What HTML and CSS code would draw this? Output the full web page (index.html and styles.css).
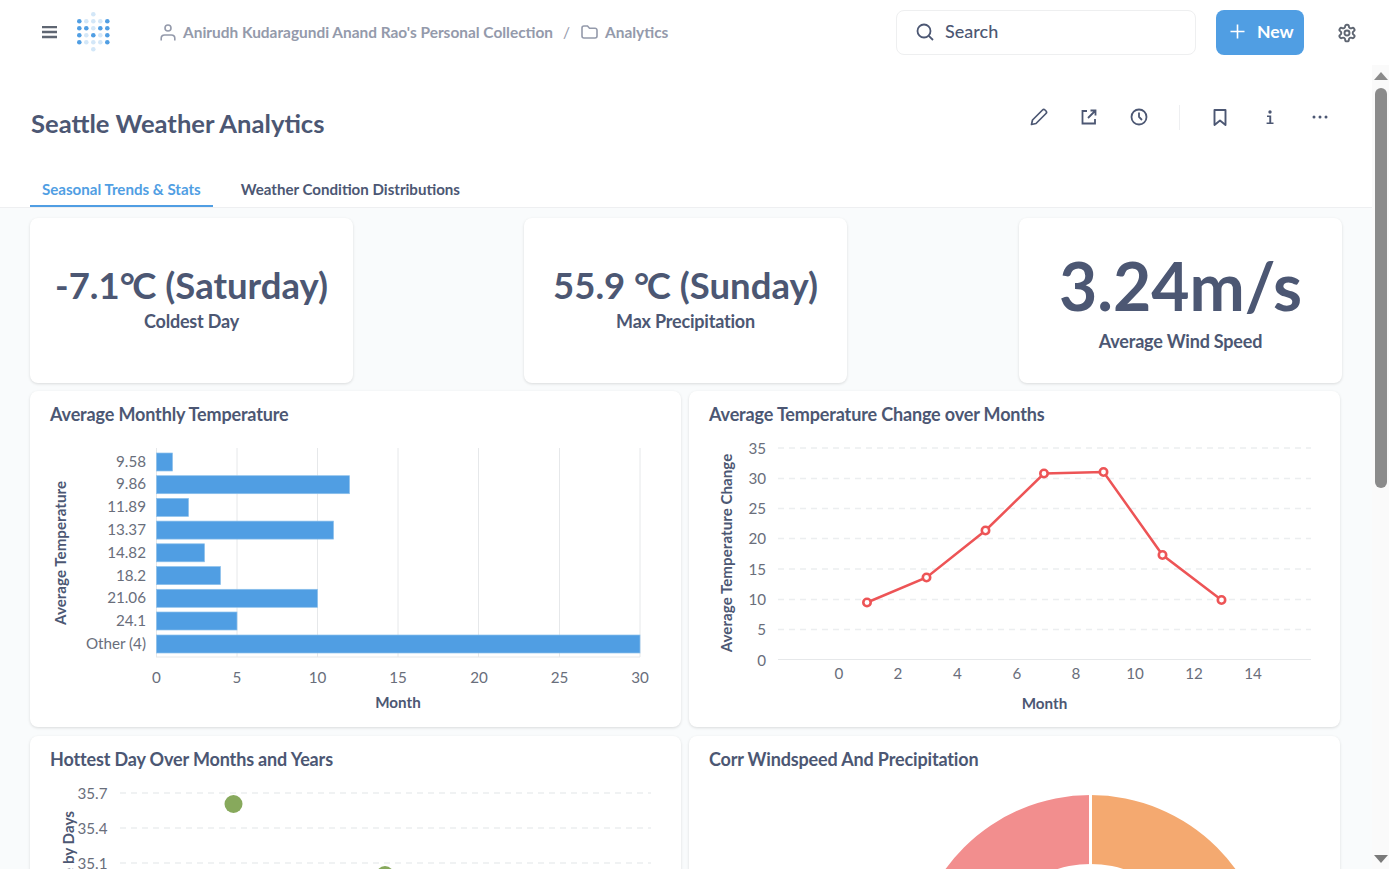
FILE: index.html
```html
<!DOCTYPE html>
<html lang="en">
<head>
  <meta charset="UTF-8" />
  <meta name="viewport" content="width=device-width, initial-scale=1.0" />
  <title>Seattle Weather Analytics</title>
  <link rel="stylesheet" href="styles.css">
</head>
<body>
  <!-- top bar -->
  <header class="topbar">
    <svg class="burger" width="16" height="13" viewBox="0 0 16 13"><path d="M0 1h15M0 6h15M0 11h15" stroke="#5f6672" stroke-width="2.400"/></svg>
    <svg class="logo" width="36" height="42" viewBox="76 12 36 42">
      <g fill="#509ee3">
        <circle cx="79.3" cy="21.3" r="2.3"/><circle cx="107.3" cy="21.3" r="2.3"/>
        <circle cx="79.3" cy="28.3" r="2.3"/><circle cx="86.3" cy="28.3" r="2.3"/><circle cx="100.3" cy="28.3" r="2.3"/><circle cx="107.3" cy="28.3" r="2.3"/>
        <circle cx="79.3" cy="35.3" r="2.3"/><circle cx="93.3" cy="35.3" r="2.3"/><circle cx="107.3" cy="35.3" r="2.3"/>
        <circle cx="79.3" cy="42.3" r="2.3"/><circle cx="107.3" cy="42.3" r="2.3"/>
      </g>
      <g fill="#d3e7f8">
        <circle cx="93.3" cy="14.3" r="2.3"/>
        <circle cx="86.3" cy="21.3" r="2.3"/><circle cx="93.3" cy="21.3" r="2.3"/><circle cx="100.3" cy="21.3" r="2.3"/>
        <circle cx="93.3" cy="28.3" r="2.3"/>
        <circle cx="86.3" cy="35.3" r="2.3"/><circle cx="100.3" cy="35.3" r="2.3"/>
        <circle cx="86.3" cy="42.3" r="2.3"/><circle cx="93.3" cy="42.3" r="2.3"/><circle cx="100.3" cy="42.3" r="2.3"/>
        <circle cx="93.3" cy="49.3" r="2.3"/>
      </g>
    </svg>
    <nav class="crumbs">
      <svg width="16" height="17" viewBox="0 0 16 17" fill="none" stroke="#949aab" stroke-width="1.6"><circle cx="8" cy="4" r="3"/><path d="M1.2 16.5v-2.2c0-2 1.5-3.3 3.5-3.3h6.6c2 0 3.5 1.300 3.500 3.300v2.200"/></svg>
      <span class="crumb-text">Anirudh Kudaragundi Anand Rao's Personal Collection</span>
      <span class="crumb-sep">/</span>
      <svg width="17" height="14" viewBox="0 0 17 14" fill="none" stroke="#949aab" stroke-width="1.6"><path d="M1 3a2 2 0 0 1 2-2h3.500l2 2.200H14a2 2 0 0 1 2 2V11a2 2 0 0 1-2 2H3a2 2 0 0 1-2-2z"/></svg>
      <span class="crumb-text">Analytics</span>
    </nav>
    <div class="search">
      <svg width="18" height="18" viewBox="0 0 18 18" fill="none" stroke="#4c5773" stroke-width="1.800"><circle cx="8" cy="8" r="6.500"/><path d="M12.800 12.800l4.200 4.200"/></svg>
      <span>Search</span>
    </div>
    <button class="new-btn">
      <svg width="15" height="15" viewBox="0 0 15 15"><path d="M7.500 0.500v14M0.500 7.500h14" stroke="#fff" stroke-width="1.600"/></svg>
      New
    </button>
    <svg class="gear" width="20" height="20" viewBox="0 0 24 24" fill="none" stroke="#5f6672" stroke-width="2.300"><path d="M12.220 2h-.44a2 2 0 0 0-2 2v.18a2 2 0 0 1-1 1.730l-.43.25a2 2 0 0 1-2 0l-.15-.08a2 2 0 0 0-2.730.73l-.22.38a2 2 0 0 0 .73 2.730l.15.1a2 2 0 0 1 1 1.720v.51a2 2 0 0 1-1 1.740l-.15.09a2 2 0 0 0-.73 2.730l.22.38a2 2 0 0 0 2.730.73l.15-.08a2 2 0 0 1 2 0l.43.25a2 2 0 0 1 1 1.730V20a2 2 0 0 0 2 2h.44a2 2 0 0 0 2-2v-.18a2 2 0 0 1 1-1.730l.43-.25a2 2 0 0 1 2 0l.15.08a2 2 0 0 0 2.730-.73l.22-.39a2 2 0 0 0-.73-2.730l-.15-.08a2 2 0 0 1-1-1.740v-.5a2 2 0 0 1 1-1.740l.15-.09a2 2 0 0 0 .73-2.730l-.22-.38a2 2 0 0 0-2.730-.73l-.15.08a2 2 0 0 1-2 0l-.43-.25a2 2 0 0 1-1-1.730V4a2 2 0 0 0-2-2z"/><circle cx="12" cy="12" r="3"/></svg>
  </header>

  <div class="main">
    <main class="content">
      <section class="dash-head">
        <div class="title-row">
          <h1>Seattle Weather Analytics</h1>
          <div class="actions">
            <span class="action"><svg width="18" height="18" viewBox="0 0 18 18" fill="none" stroke="#4c5773" stroke-width="1.700" stroke-linejoin="round"><path d="M1.500 16.500l1-4.500L12.500 2a1.800 1.800 0 0 1 2.500 0l1 1a1.800 1.800 0 0 1 0 2.500L6 15.500z"/></svg></span>
            <span class="action"><svg width="16" height="16" viewBox="0 0 16 16" fill="none" stroke="#4c5773" stroke-width="1.800"><path d="M6 2H1.500v12.500H14V10M9.500 1.500H14.500V6.500M14.500 1.500L7 9"/></svg></span>
            <span class="action"><svg width="18" height="18" viewBox="0 0 18 18" fill="none" stroke="#4c5773" stroke-width="1.800"><circle cx="9" cy="9" r="7.500"/><path d="M9 4.500V9l3 3"/></svg></span>
            <span class="divider"></span>
            <span class="action"><svg width="14" height="17" viewBox="0 0 14 17" fill="none" stroke="#4c5773" stroke-width="1.900" stroke-linejoin="round"><path d="M1.500 1h11v15L7 11.500 1.500 16z"/></svg></span>
            <span class="action"><svg width="8" height="15" viewBox="0 0 8 15" fill="#4c5773"><circle cx="4" cy="2" r="1.700"/><path d="M1 5.500h4.200v7H7.500V14H.6v-1.500h2.700V7H1z"/></svg></span>
            <span class="action"><svg width="16" height="4" viewBox="0 0 16 4" fill="#4c5773"><circle cx="2" cy="2" r="1.500"/><circle cx="8" cy="2" r="1.500"/><circle cx="14" cy="2" r="1.500"/></svg></span>
          </div>
        </div>
        <div class="tabs">
          <a class="tab active">Seasonal Trends &amp; Stats</a>
          <a class="tab">Weather Condition Distributions</a>
        </div>
      </section>

      <section class="scalars">
        <div class="card scalar"><div class="scalar-value">-7.1<span class="deg">°</span>C (Saturday)</div><div class="scalar-label">Coldest Day</div></div>
        <div class="card scalar"><div class="scalar-value">55.9 <span class="deg">°</span>C (Sunday)</div><div class="scalar-label">Max Precipitation</div></div>
        <div class="card scalar large"><div class="scalar-value">3.24m/s</div><div class="scalar-label">Average Wind Speed</div></div>
      </section>

      <section class="charts">
        <div class="card chart">
          <h2>Average Monthly Temperature</h2>
          <svg class="plot" width="651" height="291" viewBox="30 436 651 291">
            <g stroke="#e6e8ea" stroke-width="1">
              <path d="M237 448V657M317.500 448V657M398 448V657M478.500 448V657M559.500 448V657M640 448V657M156.500 448V657M156 657H640"/>
            </g>
            <g fill="#509ee3" stroke="#8cc0ec" stroke-width="0.700">
              <rect x="156.500" y="453" width="16" height="18"/>
              <rect x="156.500" y="475.700" width="193" height="18"/>
              <rect x="156.500" y="498.400" width="32" height="18"/>
              <rect x="156.500" y="521.100" width="177" height="18"/>
              <rect x="156.500" y="543.800" width="48" height="18"/>
              <rect x="156.500" y="566.600" width="64" height="18"/>
              <rect x="156.500" y="589.300" width="161" height="18"/>
              <rect x="156.500" y="612" width="80.500" height="18"/>
              <rect x="156.500" y="635" width="483.500" height="18"/>
            </g>
            <g class="tick" text-anchor="end">
              <text x="146" y="466.500">9.58</text>
              <text x="146" y="489">9.86</text>
              <text x="146" y="512">11.89</text>
              <text x="146" y="535">13.37</text>
              <text x="146" y="558">14.82</text>
              <text x="146" y="581">18.2</text>
              <text x="146" y="603">21.06</text>
              <text x="146" y="626">24.1</text>
              <text x="146" y="649">Other (4)</text>
            </g>
            <g class="tick" text-anchor="middle">
              <text x="156.500" y="683">0</text>
              <text x="237" y="683">5</text>
              <text x="317.500" y="683">10</text>
              <text x="398" y="683">15</text>
              <text x="479" y="683">20</text>
              <text x="559.500" y="683">25</text>
              <text x="640" y="683">30</text>
            </g>
            <text class="axis" x="398" y="708" text-anchor="middle">Month</text>
            <text class="axis" text-anchor="middle" transform="translate(66 553) rotate(-90)">Average Temperature</text>
          </svg>
        </div>

        <div class="card chart">
          <h2>Average Temperature Change over Months</h2>
          <svg class="plot" width="651" height="291" viewBox="689 436 651 291">
            <g stroke="#eceef0" stroke-width="1.500" stroke-dasharray="6 5">
              <path d="M778 448H1311M778 478.500H1311M778 508.500H1311M778 538.500H1311M778 569H1311M778 599.500H1311M778 629.500H1311"/>
            </g>
            <path d="M778 659.500H1311" stroke="#e6e8ea"/>
            <g class="tick" text-anchor="end">
              <text x="766" y="453.500">35</text>
              <text x="766" y="484">30</text>
              <text x="766" y="514">25</text>
              <text x="766" y="544">20</text>
              <text x="766" y="575">15</text>
              <text x="766" y="605">10</text>
              <text x="766" y="635">5</text>
              <text x="766" y="665.500">0</text>
            </g>
            <g class="tick" text-anchor="middle">
              <text x="839" y="679">0</text>
              <text x="898" y="679">2</text>
              <text x="957.500" y="679">4</text>
              <text x="1017" y="679">6</text>
              <text x="1076" y="679">8</text>
              <text x="1135" y="679">10</text>
              <text x="1194" y="679">12</text>
              <text x="1253" y="679">14</text>
            </g>
            <text class="axis" x="1044.500" y="709" text-anchor="middle">Month</text>
            <text class="axis" text-anchor="middle" transform="translate(732 553) rotate(-90)">Average Temperature Change</text>
            <polyline points="867,602.500 926.500,577.500 985.500,530.500 1044,473.500 1103.500,472 1162.500,555 1221.500,600" fill="none" stroke="#ed5456" stroke-width="2.500"/>
            <g fill="#fff" stroke="#ed5456" stroke-width="2.600">
              <circle cx="867" cy="602.500" r="3.700"/><circle cx="926.500" cy="577.500" r="3.700"/><circle cx="985.500" cy="530.500" r="3.700"/><circle cx="1044" cy="473.500" r="3.700"/><circle cx="1103.500" cy="472" r="3.700"/><circle cx="1162.500" cy="555" r="3.700"/><circle cx="1221.500" cy="600" r="3.700"/>
            </g>
          </svg>
        </div>

        <div class="card chart">
          <h2>Hottest Day Over Months and Years</h2>
          <svg class="plot" width="651" height="291" viewBox="30 781 651 291">
            <g stroke="#eceef0" stroke-width="1.500" stroke-dasharray="6 5">
              <path d="M120 793H651M120 828H651M120 863H651"/>
            </g>
            <g class="tick" text-anchor="end">
              <text x="107.500" y="799">35.7</text>
              <text x="107.500" y="834">35.4</text>
              <text x="107.500" y="869">35.1</text>
            </g>
            <circle cx="233.500" cy="804" r="9" fill="#87a95c"/>
            <circle cx="385" cy="875" r="9" fill="#87a95c"/>
            <text class="axis" text-anchor="end" transform="translate(74 811) rotate(-90)">Max Temperature by Days</text>
          </svg>
        </div>

        <div class="card chart">
          <h2>Corr Windspeed And Precipitation</h2>
          <svg class="plot" width="651" height="291" viewBox="689 781 651 291">
            <path d="M1090.500 795A179 179 0 0 0 911.500 974H980.500A110 110 0 0 1 1090.500 864Z" fill="#f28e8e"/>
            <path d="M1090.500 795A179 179 0 0 1 1269.500 974H1200.500A110 110 0 0 0 1090.500 864Z" fill="#f4a970"/>
            <path d="M1090.500 790V870" stroke="#fff" stroke-width="3"/>
          </svg>
        </div>
      </section>
    </main>

    <div class="scrollbar">
      <span class="arrow-up"></span>
      <span class="thumb"></span>
      <span class="arrow-down"></span>
    </div>
  </div>
</body>
</html>
```

FILE: styles.css
```css
* { box-sizing: border-box; }
html, body { height: 100%; }
body {
  margin: 0;
  height: 100vh;
  overflow: hidden;
  display: flex;
  flex-direction: column;
  background: #fff;
  color: #4c5773;
  font-family: Lato, "Liberation Sans", sans-serif;
}

/* top bar */
.topbar {
  flex: none;
  height: 65px;
  display: flex;
  align-items: center;
  background: #fff;
}
.burger { margin-left: 42px; }
.logo { margin-left: 18px; }
.crumbs {
  display: flex;
  align-items: center;
  margin-left: 48px;
  margin-top: -1px;
  font-size: 15.43px;
  font-weight: 700;
  color: #949aab;
}
.crumb-text { margin-left: 7px; }
.crumb-sep { margin: 0 11px 0 10px; font-weight: 400; }
.search {
  display: flex;
  align-items: center;
  width: 300px;
  height: 45px;
  margin-left: auto;
  padding: 0 0 2px 19px;
  border: 1px solid #eeeff0;
  border-radius: 8px;
  font-size: 18px;
  font-weight: 500;
}
.search span { margin: -2px 0 0 11px; }
.new-btn {
  display: flex;
  align-items: center;
  width: 88px;
  height: 45px;
  margin-left: 20px;
  padding: 0 0 2px 14px;
  border: none;
  border-radius: 8px;
  background: #509ee3;
  color: #fff;
  font-family: inherit;
  font-size: 17.6px;
  font-weight: 700;
}
.new-btn svg { margin-right: 12px; }
.gear { margin: 0 32px 0 33px; }

/* body */
.main {
  flex: 1;
  display: flex;
  min-height: 0;
}
.content {
  flex: 1;
  min-width: 0;
  overflow: hidden;
  background: #f9fbfc;
}
.dash-head {
  height: 143px;
  background: #fff;
  border-bottom: 1px solid #eeeff1;
  display: flex;
  flex-direction: column;
}
.title-row {
  display: flex;
  justify-content: space-between;
  height: 105px;
  padding-left: 31px;
}
h1 {
  margin: 41px 0 0;
  font-size: 25.6px;
  line-height: 34px;
  font-weight: 700;
}
.actions {
  display: flex;
  align-items: center;
  height: 104px;
  margin-right: 27px;
}
.action {
  width: 50px;
  display: flex;
  justify-content: center;
  align-items: center;
}
.divider {
  width: 1px;
  height: 25px;
  margin: 0 15px;
  background: #eeeff1;
}

/* tabs */
.tabs {
  display: flex;
  padding-left: 30px;
}
.tab {
  height: 37px;
  padding: 9px 12px 0;
  margin-right: 16px;
  font-size: 15.1px;
  line-height: 20px;
  font-weight: 700;
  color: #4c5773;
}
.tab.active {
  color: #509ee3;
  border-bottom: 2px solid #509ee3;
}

/* cards */
.card {
  background: #fff;
  border-radius: 8px;
  box-shadow: 0 1px 3px rgba(0, 0, 0, 0.13);
}
.scalars {
  display: flex;
  gap: 171px;
  width: 1312px;
  height: 165px;
  margin: 10px 0 0 30px;
}
.scalar {
  width: 323px;
  padding-bottom: 6px;
  display: flex;
  flex-direction: column;
  align-items: center;
  justify-content: center;
}
.scalar-value {
  margin: -1px 0 1px;
  font-size: 36.5px;
  line-height: 46px;
  font-weight: 700;
}
.deg { letter-spacing: -2.5px; }
.scalar-label {
  font-size: 18px;
  line-height: 24px;
  letter-spacing: -0.2px;
  font-weight: 700;
}
.scalar.large {
  margin-left: auto;
  padding-bottom: 5px;
}
.large .scalar-value {
  margin: 0;
  font-size: 66px;
  line-height: 86px;
}

.charts {
  display: grid;
  grid-template-columns: 651px 651px;
  grid-auto-rows: 336px;
  column-gap: 8px;
  row-gap: 9px;
  margin: 8px 0 0 30px;
}
.chart h2 {
  margin: 0;
  height: 45px;
  padding: 11px 20px 0;
  font-size: 18px;
  line-height: 24px;
  letter-spacing: -0.15px;
  font-weight: 700;
}
.plot { display: block; }
.tick {
  font-size: 15.2px;
  fill: #696e7b;
}
.axis {
  font-size: 15.2px;
  font-weight: 700;
  fill: #4c5773;
}

/* scrollbar drawn by hand, the window itself does not scroll */
.scrollbar {
  flex: none;
  width: 17px;
  background: #fafafa;
  display: flex;
  flex-direction: column;
  align-items: center;
}
.thumb {
  width: 12px;
  height: 400px;
  margin-top: 8px;
  border-radius: 6px;
  background: #8b8b8b;
}
.arrow-up {
  margin-top: 7px;
  border-left: 7px solid transparent;
  border-right: 7px solid transparent;
  border-bottom: 8px solid #8b8b8b;
}
.arrow-down {
  margin-top: auto;
  margin-bottom: 6px;
  border-left: 7px solid transparent;
  border-right: 7px solid transparent;
  border-top: 8px solid #7a7a7a;
}
```
